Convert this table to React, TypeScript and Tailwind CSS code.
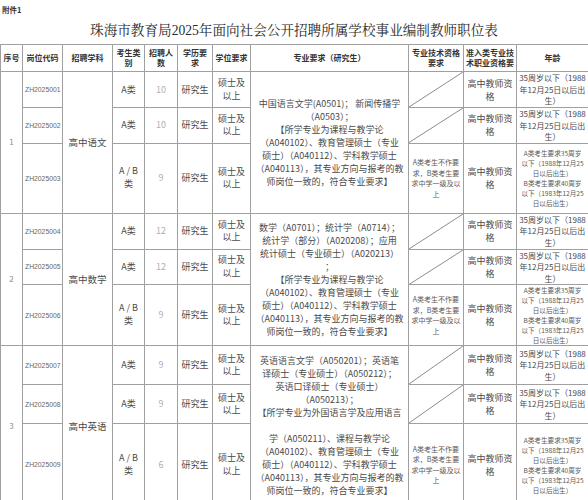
import React from "react";

type Row = { code: string; kind: "A" | "AB"; count: string; h: string };
type Group = { no: string; subject: string; major: string[]; rows: Row[] };

const groups: Group[] = [
  {
    no: "1",
    subject: "高中语文",
    major: [
      "中国语言文学(A0501)； 新闻传播学",
      "（A0503）；",
      "【所学专业为课程与教学论",
      "（A040102）、教育管理硕士（专业",
      "硕士）（A040112）、学科教学硕士",
      "（A040113），其专业方向与报考的教",
      "师岗位一致的，符合专业要求】",
    ],
    rows: [
      { code: "ZH2025001", kind: "A", count: "10", h: "h-[36px]" },
      { code: "ZH2025002", kind: "A", count: "10", h: "h-[35px]" },
      { code: "ZH2025003", kind: "AB", count: "9", h: "h-[70px]" },
    ],
  },
  {
    no: "2",
    subject: "高中数学",
    major: [
      "数学（A0701）；统计学（A0714）；",
      "统计学（部分）（A020208）；应用",
      "统计硕士（专业硕士）（A020213）",
      "；",
      "【所学专业为课程与教学论",
      "（A040102）、教育管理硕士（专业",
      "硕士）（A040112）、学科教学硕士",
      "（A040113），其专业方向与报考的教",
      "师岗位一致的，符合专业要求】",
    ],
    rows: [
      { code: "ZH2025004", kind: "A", count: "12", h: "h-[36px]" },
      { code: "ZH2025005", kind: "A", count: "12", h: "h-[35px]" },
      { code: "ZH2025006", kind: "AB", count: "9", h: "h-[61px]" },
    ],
  },
  {
    no: "3",
    subject: "高中英语",
    major: [
      "英语语言文学（A050201）；英语笔",
      "译硕士（专业硕士）（A050212）；",
      "英语口译硕士（专业硕士）",
      "（A050213）；",
      "【所学专业为外国语言学及应用语言",
      "",
      "学（A050211）、课程与教学论",
      "（A040102）、教育管理硕士（专业",
      "硕士）（A040112）、学科教学硕士",
      "（A040113），其专业方向与报考的教",
      "师岗位一致的，符合专业要求】",
    ],
    rows: [
      { code: "ZH2025007", kind: "A", count: "9", h: "h-[39px]" },
      { code: "ZH2025008", kind: "A", count: "9", h: "h-[39px]" },
      { code: "ZH2025009", kind: "AB", count: "6", h: "h-[82px]" },
    ],
  },
];

const ageA = ["35周岁以下（1988", "年12月25日以后出", "生）"];
const ageAB = [
  "A类考生要求35周岁",
  "以下（1988年12月25",
  "日以后出生）",
  "B类考生要求40周岁",
  "以下（1983年12月25",
  "日以后出生）",
];
const qualAB = ["A类考生不作要", "求，B类考生要", "求中学一级及以", "上"];
const degree = ["硕士及", "以上"];
const cert = ["高中教师资", "格"];

const cell = "border border-[#a0a0a0] p-0 align-middle text-center";

// every line gets a fixed box so mixed fonts can't grow the rows
function Lines({ items, h }: { items: string[]; h: string }) {
  return (
    <>
      {items.map((t, i) => (
        <div key={i} className={`${h} whitespace-nowrap`}>
          {t === "" ? "\u00a0" : t}
        </div>
      ))}
    </>
  );
}

function Diagonal() {
  return (
    <svg
      className="absolute inset-0 h-full w-full"
      viewBox="0 0 100 100"
      preserveAspectRatio="none"
    >
      <line
        x1="0"
        y1="100"
        x2="100"
        y2="0"
        stroke="#8c8c8c"
        strokeWidth="1"
        vectorEffect="non-scaling-stroke"
      />
    </svg>
  );
}

export default function App() {
  return (
    <div className="h-[500px] w-[588px] overflow-hidden bg-white font-['Noto_Sans_CJK_SC','Noto_Sans',sans-serif] text-[#4a4a4a]">
      <div className="h-[23px] pl-[2px] pt-[5px] text-[7.5px] font-semibold leading-[9px] text-[#333]">
        附件1
      </div>
      <div className="h-[21px] text-center font-['Liberation_Serif','Noto_Serif_CJK_SC','Noto_Sans_CJK_SC',serif] text-[13.6px] leading-[16px] text-[#2a2a2a]">
        珠海市教育局2025年面向社会公开招聘所属学校事业编制教师职位表
      </div>
      <table className="w-[588px] table-fixed border-collapse">
        <colgroup>
          <col className="w-[22px]" />
          <col className="w-[40px]" />
          <col className="w-[50px]" />
          <col className="w-[32px]" />
          <col className="w-[33px]" />
          <col className="w-[35px]" />
          <col className="w-[38px]" />
          <col className="w-[158px]" />
          <col className="w-[55px]" />
          <col className="w-[53px]" />
          <col className="w-[72px]" />
        </colgroup>
        <thead>
          <tr className="h-[27px] text-[8px] font-bold leading-[10.5px] text-[#333]">
            <th className={cell}>序号</th>
            <th className={cell}>岗位代码</th>
            <th className={cell}>招聘学科</th>
            <th className={cell}>
              考生类
              <br />别
            </th>
            <th className={cell}>
              招聘人
              <br />数
            </th>
            <th className={cell}>
              学历要
              <br />求
            </th>
            <th className={cell}>学位要求</th>
            <th className={cell}>专业要求（研究生）</th>
            <th className={cell}>
              专业技术资格
              <br />
              要求
            </th>
            <th className={cell}>
              准入类专业技
              <br />
              术职业资格要
            </th>
            <th className={cell}>年龄</th>
          </tr>
        </thead>
        <tbody className="text-[9px] leading-[12px]">
          {groups.map((g) =>
            g.rows.map((r, i) => (
              <tr key={r.code} className={r.h}>
                {i === 0 && (
                  <td rowSpan={3} className={`${cell} text-[8px] text-[#8a8a8a]`}>
                    {g.no}
                  </td>
                )}
                <td className={`${cell} pl-[2px] text-left text-[6.8px] text-[#666]`}>
                  <span className="font-['Liberation_Sans',sans-serif]">{r.code}</span>
                </td>
                {i === 0 && (
                  <td rowSpan={3} className={`${cell} text-[9.5px]`}>
                    {g.subject}
                  </td>
                )}
                <td className={cell}>
                  {r.kind === "A" ? (
                    <Lines items={["A类"]} h="h-[12px]" />
                  ) : (
                    <Lines items={["A / B", "类"]} h="h-[13px]" />
                  )}
                </td>
                <td className={`${cell} text-[#b0b0b0]`}>{r.count}</td>
                <td className={cell}>
                  <Lines items={["研究生"]} h="h-[12px]" />
                </td>
                <td className={cell}>
                  <Lines items={degree} h="h-[12.5px]" />
                </td>
                {i === 0 && (
                  <td rowSpan={3} className={`${cell} leading-[13px]`}>
                    <Lines items={g.major} h="h-[13px]" />
                  </td>
                )}
                {r.kind === "A" ? (
                  <td className={`${cell} relative`}>
                    <Diagonal />
                  </td>
                ) : (
                  <td className={`${cell} text-[7px] leading-[10.5px] text-[#5a5a5a]`}>
                    <Lines items={qualAB} h="h-[10.5px]" />
                  </td>
                )}
                <td className={`${cell} leading-[13px]`}>
                  <Lines items={cert} h="h-[13px]" />
                </td>
                {r.kind === "A" ? (
                  <td className={`${cell} text-[8px] leading-[11.5px]`}>
                    <Lines items={ageA} h="h-[11.5px]" />
                  </td>
                ) : (
                  <td className={`${cell} text-[6.6px] leading-[10px] text-[#5a5a5a]`}>
                    <Lines items={ageAB} h="h-[10px]" />
                  </td>
                )}
              </tr>
            ))
          )}
        </tbody>
      </table>
    </div>
  );
}
